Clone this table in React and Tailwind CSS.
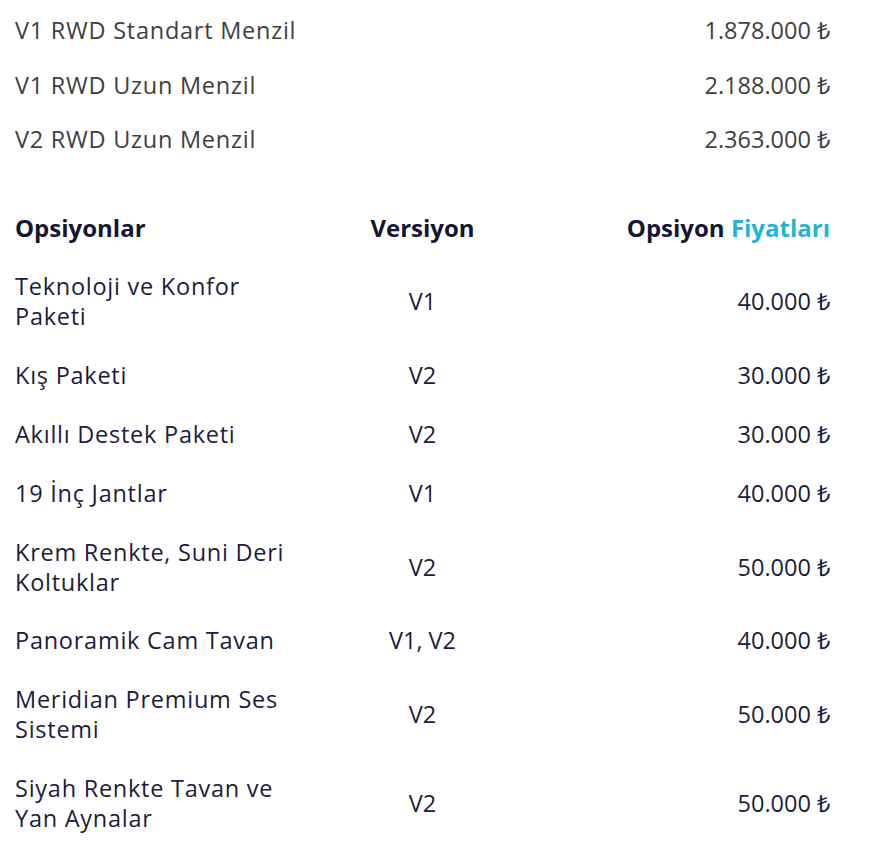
import React from "react";

const top = [
  ["V1 RWD Standart Menzil", "1.878.000 ₺"],
  ["V1 RWD Uzun Menzil", "2.188.000 ₺"],
  ["V2 RWD Uzun Menzil", "2.363.000 ₺"],
];

const opts = [
  ["Teknoloji ve Konfor Paketi", "V1", "40.000 ₺"],
  ["Kış Paketi", "V2", "30.000 ₺"],
  ["Akıllı Destek Paketi", "V2", "30.000 ₺"],
  ["19 İnç Jantlar", "V1", "40.000 ₺"],
  ["Krem Renkte, Suni Deri Koltuklar", "V2", "50.000 ₺"],
  ["Panoramik Cam Tavan", "V1, V2", "40.000 ₺"],
  ["Meridian Premium Ses Sistemi", "V2", "50.000 ₺"],
  ["Siyah Renkte Tavan ve Yan Aynalar", "V2", "50.000 ₺"],
];

export default function App() {
  return (
    <div
      className="w-[883px] h-[847px] bg-white overflow-hidden pl-[15px] pr-[53px] pt-[3px] text-[23.5px] leading-[30px]"
      style={{ fontFamily: '"Open Sans", sans-serif' }}
    >
      <div className="flex flex-col text-[#404040]">
        {top.map(([a, b]) => (
          <div key={a} className="flex justify-between py-[12.25px]">
            <span className="tracking-[0.75px]">{a}</span>
            <span>{b}</span>
          </div>
        ))}
      </div>
      <div className="mt-[31.5px] text-[#1c1c3c]">
        <div className="grid grid-cols-3 py-[14.5px] font-bold text-[24px] text-[#141433]">
          <div>Opsiyonlar</div>
          <div className="text-center">Versiyon</div>
          <div className="text-right">
            Opsiyon <span className="text-[#1fb4d8]">Fiyatları</span>
          </div>
        </div>
        {opts.map(([a, b, c]) => (
          <div key={a} className="grid grid-cols-3 items-center py-[14.4px]">
            <div className="tracking-[0.75px]">{a}</div>
            <div className="text-center">{b}</div>
            <div className="text-right">{c}</div>
          </div>
        ))}
      </div>
    </div>
  );
}
